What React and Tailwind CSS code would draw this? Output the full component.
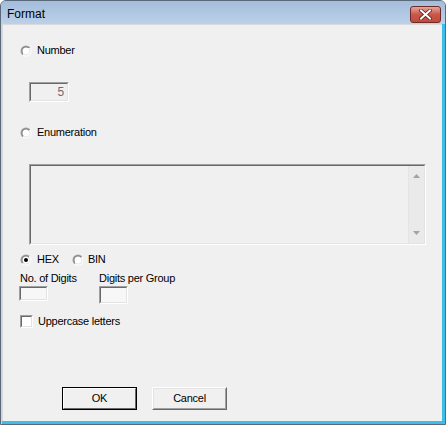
import React from "react";

function Radio({ checked }) {
  return (
    <svg width="12" height="12" viewBox="0 0 12 12" className="shrink-0">
      <defs>
        <linearGradient id="rg1" x1="0" y1="0" x2="1" y2="1">
          <stop offset="0.5" stopColor="#a0a0a0" />
          <stop offset="0.5" stopColor="#ffffff" />
        </linearGradient>
        <linearGradient id="rg2" x1="0" y1="0" x2="1" y2="1">
          <stop offset="0.5" stopColor="#808080" />
          <stop offset="0.5" stopColor="#e3e3e3" />
        </linearGradient>
      </defs>
      <circle cx="6" cy="6" r="5.5" fill="url(#rg1)" />
      <circle cx="6" cy="6" r="4.5" fill="url(#rg2)" />
      <circle cx="6" cy="6" r="3.5" fill="#ffffff" />
      {checked && <circle cx="6" cy="6" r="2" fill="#000000" />}
    </svg>
  );
}

function Sunken({ className, children, bg = "bg-white" }) {
  return (
    <div className={`border border-t-[#a0a0a0] border-l-[#a0a0a0] border-b-white border-r-white ${className}`}>
      <div className={`w-full h-full border border-t-[#696969] border-l-[#696969] border-b-[#e3e3e3] border-r-[#e3e3e3] ${bg}`}>
        {children}
      </div>
    </div>
  );
}

export default function App() {
  return (
    <div
      className="w-[446px] h-[425px] flex flex-col bg-[#c2d5ea] border border-[#5b6a7a] rounded-t-[6px] overflow-hidden text-[11px] tracking-[-0.25px] text-black"
      style={{ fontFamily: '"Liberation Sans", Arial, sans-serif' }}
    >
      {/* Title bar */}
      <div className="h-[23px] shrink-0 flex items-center justify-between pl-[6px] pr-[4px] bg-gradient-to-b from-[#a3bddb] to-[#bcd1e9]">
        <span className="text-[12px] tracking-normal text-black pt-[3px]">Format</span>
        <div className="w-[31px] h-[17px] mt-[4px] rounded-[3px] border border-[#6e2a25] bg-gradient-to-b from-[#e3a69d] via-[#c9574a] to-[#c04a3c] flex items-center justify-center">
          <svg width="13" height="11" viewBox="0 0 13 11">
            <path d="M2 1.5 L11 9.5 M11 1.5 L2 9.5" stroke="#5a1f1a" strokeWidth="3.6" strokeLinecap="square" />
            <path d="M2 1.5 L11 9.5 M11 1.5 L2 9.5" stroke="#ffffff" strokeWidth="2" strokeLinecap="square" />
          </svg>
        </div>
      </div>

      {/* Body frame */}
      <div className="flex-1 flex pl-[1px]">
        <div className="flex-1 flex flex-col border-r-[3px] border-b-[3px] border-[#3fbde9]">
          <div className="flex-1 bg-[#f0f0f0] border-l border-t border-[#d9d9d9] pl-[17px] flex flex-col">
            {/* Number */}
            <div className="flex items-center h-[13px] mt-[19px] gap-[5px]">
              <Radio />
              <span>Number</span>
            </div>
            <Sunken className="w-[40px] h-[20px] ml-[9px] mt-[25px]" bg="bg-[#f0f0f0]">
              <div className="h-full flex items-center justify-end pr-[3px] text-[#6d6d6d] text-[12px]">5</div>
            </Sunken>

            {/* Enumeration */}
            <div className="flex items-center h-[13px] mt-[24px] gap-[5px]">
              <Radio />
              <span>Enumeration</span>
            </div>
            <Sunken className="w-[397px] h-[81px] ml-[9px] mt-[25px]" bg="bg-[#f0f0f0]">
              <div className="h-full flex justify-end">
                <div className="w-[16px] h-full bg-[#eaeaea] border-l border-[#e4e4e4] flex flex-col items-center justify-between py-[8px]">
                  <svg width="7" height="4" viewBox="0 0 7 4"><path d="M3.5 0 L7 4 L0 4 Z" fill="#a3a3a3" /></svg>
                  <svg width="7" height="4" viewBox="0 0 7 4"><path d="M0 0 L7 0 L3.5 4 Z" fill="#a3a3a3" /></svg>
                </div>
              </div>
            </Sunken>

            {/* HEX / BIN */}
            <div className="flex items-center h-[13px] mt-[8px]">
              <Radio checked />
              <span className="ml-[5px]">HEX</span>
              <span className="ml-[13px]"><Radio /></span>
              <span className="ml-[4px]">BIN</span>
            </div>

            <div className="flex mt-[6px]">
              <div className="w-[79px] flex flex-col">
                <span className="h-[13px] leading-[13px]">No. of Digits</span>
                <Sunken className="w-[29px] h-[15px] mt-[1px] ml-[-1px]" bg="bg-[#f7f7f7]" />
              </div>
              <div className="flex flex-col">
                <span className="h-[13px] leading-[13px]">Digits per Group</span>
                <Sunken className="w-[29px] h-[18px] mt-[1px]" bg="bg-[#f7f7f7]" />
              </div>
            </div>

            {/* Checkbox */}
            <div className="flex items-center h-[13px] mt-[11px] gap-[5px]">
              <Sunken className="w-[13px] h-[13px] shrink-0" />
              <span>Uppercase letters</span>
            </div>

            {/* Buttons */}
            <div className="flex mt-[59px] ml-[42px] gap-[15px]">
              <div className="w-[75px] h-[23px] border border-black">
                <div className="w-full h-full border border-t-white border-l-white border-b-[#696969] border-r-[#696969] bg-[#f0f0f0] flex items-center justify-center">
                  OK
                </div>
              </div>
              <div className="w-[75px] h-[23px] border border-t-white border-l-white border-b-[#696969] border-r-[#696969]">
                <div className="w-full h-full border border-t-[#e3e3e3] border-l-[#e3e3e3] border-b-[#a0a0a0] border-r-[#a0a0a0] bg-[#f0f0f0] flex items-center justify-center">
                  Cancel
                </div>
              </div>
            </div>
          </div>
        </div>
      </div>
    </div>
  );
}
